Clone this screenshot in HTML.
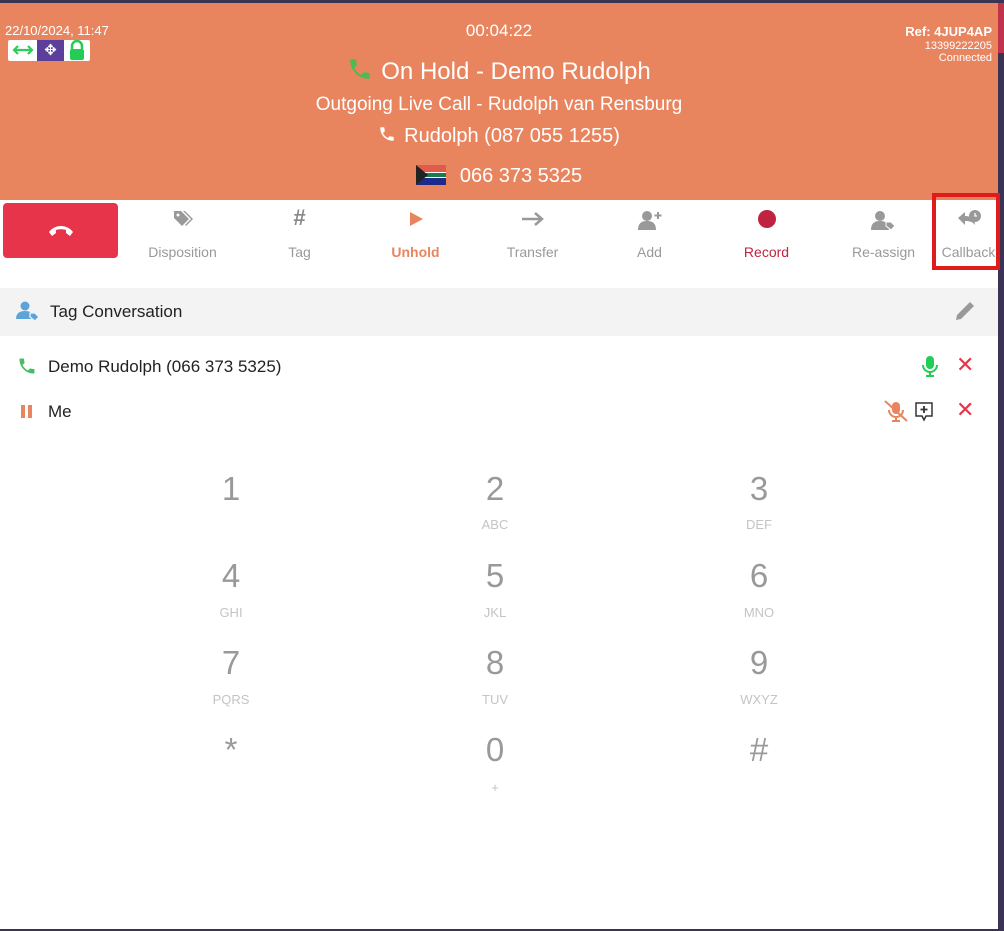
<!DOCTYPE html>
<html><head><meta charset="utf-8"><style>
*{margin:0;padding:0;box-sizing:border-box}
body{width:1004px;height:931px;overflow:hidden;background:#fff;font-family:"Liberation Sans",sans-serif;position:relative}
.a{position:absolute}
.hdr{left:0;top:3px;width:998px;height:197px;background:#E8855F;color:#fff}
.c{text-align:center;width:998px;left:0}
.tb{top:203px;text-align:center;width:117px}
.tb .l{position:absolute;top:41px;left:0;width:100%;font-size:14px;color:#999}
.tb svg{position:absolute;left:50%;top:6px;transform:translateX(-50%)}
.d{width:120px;text-align:center;color:#999;font-size:33px}
.s{width:120px;text-align:center;color:#c4c4c4;font-size:13px}
.ph{display:inline-block;vertical-align:middle}
</style></head><body>
<div class="a" style="left:0;top:0;width:1004px;height:3px;background:#3b3552"></div>
<div class="a" style="left:998px;top:0;width:6px;height:931px;background:#3b3356"></div>
<div class="a" style="left:998px;top:3px;width:6px;height:50px;background:#c0334a"></div>
<div class="a" style="left:0;top:929px;width:998px;height:2px;background:#3b3356"></div>
<div class="a hdr">
 <div class="a" style="left:5px;top:20px;font-size:13px">22/10/2024, 11:47</div>
 <div class="a" style="left:8px;top:37px;width:82px;height:21px;background:#fff;border-radius:2px"></div>
 <svg class="a" style="left:11px;top:39px" width="24" height="16"><path d="M3 8h18M7 4L3 8l4 4M17 4l4 4-4 4" stroke="#2ecc5a" stroke-width="2.2" fill="none"/></svg>
 <div class="a" style="left:37px;top:37px;width:27px;height:21px;background:#5b3f9a;color:#fff;font-size:15px;text-align:center;line-height:21px">✥</div>
 <svg class="a" style="left:67px;top:37px" width="20" height="20"><path d="M5 9V6a5 5 0 0 1 10 0v3" stroke="#22cc55" stroke-width="2.5" fill="none"/><rect x="3" y="9" width="14" height="11" rx="2" fill="#22cc55"/></svg>
 <div class="a c" style="top:18px;font-size:17px">00:04:22</div>
 <div class="a c" style="top:53px;font-size:24px"><svg class="ph" width="26" height="26" viewBox="0 0 24 24" style="margin-right:8px;vertical-align:-3px"><path d="M6.6 10.8c1.4 2.8 3.8 5.1 6.6 6.6l2.2-2.2c.3-.3.7-.4 1-.2 1.1.4 2.3.6 3.6.6.6 0 1 .4 1 1V20c0 .6-.4 1-1 1C10.6 21 3 13.4 3 4c0-.6.4-1 1-1h3.5c.6 0 1 .4 1 1 0 1.3.2 2.5.6 3.6.1.3 0 .7-.2 1z" fill="#4cbb55"/></svg>On Hold - Demo Rudolph</div>
 <div class="a c" style="top:91px;font-size:19px">Outgoing Live Call - Rudolph van Rensburg</div>
 <div class="a c" style="top:122px;font-size:20px"><svg class="ph" width="18" height="18" viewBox="0 0 24 24" style="margin-right:8px;vertical-align:-1px"><path d="M6.6 10.8c1.4 2.8 3.8 5.1 6.6 6.6l2.2-2.2c.3-.3.7-.4 1-.2 1.1.4 2.3.6 3.6.6.6 0 1 .4 1 1V20c0 .6-.4 1-1 1C10.6 21 3 13.4 3 4c0-.6.4-1 1-1h3.5c.6 0 1 .4 1 1 0 1.3.2 2.5.6 3.6.1.3 0 .7-.2 1z" fill="#fff"/></svg>Rudolph (087 055 1255)</div>
 <div class="a c" style="top:162px;font-size:20px"><span style="display:inline-block;width:30px;height:20px;vertical-align:-3px;margin-right:14px;background:linear-gradient(#e25a4a 0 35%,#fff 35% 40%,#1d7a4a 40% 60%,#fff 60% 65%,#1e2a8a 65%);position:relative"><span style="position:absolute;left:0;top:0;border-left:12px solid #222;border-top:10px solid transparent;border-bottom:10px solid transparent"></span></span>066 373 5325</div>
 <div class="a" style="right:6px;top:21px;font-size:13px;font-weight:bold;text-align:right">Ref: 4JUP4AP</div>
 <div class="a" style="right:6px;top:37px;font-size:11px;text-align:right;line-height:12px">13399222205<br>Connected</div>
</div>
<div class="a" style="left:3px;top:203px;width:115px;height:55px;background:#E8344A;border-radius:4px"></div>
<svg class="a" style="left:48px;top:223px" width="26" height="14"><path d="M1 9c6-8 18-8 24 0l-3 4-4-3v-3c-3-1-7-1-10 0v3l-4 3z" fill="#fff"/></svg>
<div class="a tb" style="left:124px"><svg width="22" height="20"><path d="M2 2h7l8 8-7 7-8-8z" fill="#999"/><path d="M11 2h2l8 8-7 7-1-1 6-6z" fill="#999"/><circle cx="6" cy="6" r="1.5" fill="#fff"/></svg><div class="l">Disposition</div></div>
<div class="a tb" style="left:241px"><div style="position:absolute;top:2px;width:100%;font-size:22px;color:#888;font-weight:bold">#</div><div class="l">Tag</div></div>
<div class="a tb" style="left:357px"><svg width="18" height="20"><path d="M3 3l13 7-13 7z" fill="#E8855F"/></svg><div class="l" style="color:#E8855F;font-weight:bold">Unhold</div></div>
<div class="a tb" style="left:474px"><svg width="26" height="20"><path d="M2 10h20M15 4l7 6-7 6" stroke="#999" stroke-width="2.5" fill="none"/></svg><div class="l">Transfer</div></div>
<div class="a tb" style="left:591px"><svg width="24" height="22"><circle cx="9" cy="7" r="5" fill="#999"/><path d="M0 21c0-7 4-9 9-9s9 2 9 9z" fill="#999"/><path d="M20 3v7M16.5 6.5h7" stroke="#999" stroke-width="2"/></svg><div class="l">Add</div></div>
<div class="a tb" style="left:708px"><svg width="20" height="20"><circle cx="10" cy="10" r="9" fill="#c0233f"/></svg><div class="l" style="color:#c0233f">Record</div></div>
<div class="a tb" style="left:825px"><svg width="26" height="22"><circle cx="9" cy="7" r="5" fill="#999"/><path d="M0 21c0-7 4-9 9-9s9 2 9 9z" fill="#999"/><path d="M15 13h5l4 4-4 4-5-4z" fill="#999" stroke="#fff" stroke-width="1"/></svg><div class="l">Re-assign</div></div>
<div class="a tb" style="left:910px"><svg width="26" height="22"><path d="M2 9l7-6v4c6 0 10 3 10 9-2-3-5-4-10-4v4z" fill="#999"/><circle cx="19" cy="7" r="6" fill="#999"/><path d="M19 4v3h2" stroke="#fff" stroke-width="1.3" fill="none"/></svg><div class="l">Callback</div></div>
<div class="a" style="left:932px;top:193px;width:68px;height:77px;border:4px solid #e01b1b"></div>
<div class="a" style="left:0;top:288px;width:998px;height:48px;background:#f3f3f3"></div>
<svg class="a" style="left:16px;top:301px" width="24" height="20"><circle cx="9" cy="5" r="4.5" fill="#5ba3d9"/><path d="M0 18c0-6 4-8 9-8s9 2 9 8z" fill="#5ba3d9"/><path d="M14 12h5l4 4-4 4-5-4z" fill="#5ba3d9" stroke="#f3f3f3" stroke-width="1.3"/></svg>
<div class="a" style="left:50px;top:302px;font-size:17px;color:#222">Tag Conversation</div>
<svg class="a" style="left:954px;top:300px" width="24" height="22"><path d="M2 20l1-5 13-13 4 4-13 13z" fill="#999"/></svg>
<svg class="a" style="left:17px;top:356px" width="20" height="20" viewBox="0 0 24 24"><path d="M6.6 10.8c1.4 2.8 3.8 5.1 6.6 6.6l2.2-2.2c.3-.3.7-.4 1-.2 1.1.4 2.3.6 3.6.6.6 0 1 .4 1 1V20c0 .6-.4 1-1 1C10.6 21 3 13.4 3 4c0-.6.4-1 1-1h3.5c.6 0 1 .4 1 1 0 1.3.2 2.5.6 3.6.1.3 0 .7-.2 1z" fill="#4cbb66"/></svg>
<div class="a" style="left:48px;top:357px;font-size:17px;color:#222">Demo Rudolph (066 373 5325)</div>
<svg class="a" style="left:920px;top:355px" width="20" height="22"><rect x="6" y="1" width="8" height="13" rx="4" fill="#22cc55"/><path d="M3 10a7 7 0 0 0 14 0M10 17v4M6 21h8" stroke="#22cc55" stroke-width="2" fill="none"/></svg>
<div class="a" style="left:956px;top:352px;color:#e8344a;font-size:22px">✕</div>
<div class="a" style="left:21px;top:405px;width:4px;height:13px;background:#E8855F"></div>
<div class="a" style="left:28px;top:405px;width:4px;height:13px;background:#E8855F"></div>
<div class="a" style="left:48px;top:402px;font-size:17px;color:#222">Me</div>
<svg class="a" style="left:884px;top:400px" width="24" height="22"><rect x="8" y="2" width="8" height="12" rx="4" fill="#E8855F"/><path d="M5 10a7 7 0 0 0 14 0M12 17v4M8 21h8" stroke="#E8855F" stroke-width="2" fill="none"/><path d="M1 1l22 20" stroke="#E8855F" stroke-width="2"/></svg>
<svg class="a" style="left:914px;top:401px" width="20" height="22"><path d="M2 2h16v13h-6l-2 4-2-4H2z" stroke="#333" stroke-width="1.5" fill="none"/><path d="M10 5v7M6.5 8.5h7" stroke="#333" stroke-width="1.8"/></svg>
<div class="a" style="left:956px;top:397px;color:#e8344a;font-size:22px">✕</div>
<div class="a d" style="left:171px;top:470px">1</div>
<div class="a d" style="left:435px;top:470px">2</div><div class="a s" style="left:435px;top:517px">ABC</div>
<div class="a d" style="left:699px;top:470px">3</div><div class="a s" style="left:699px;top:517px">DEF</div>
<div class="a d" style="left:171px;top:557px">4</div><div class="a s" style="left:171px;top:605px">GHI</div>
<div class="a d" style="left:435px;top:557px">5</div><div class="a s" style="left:435px;top:605px">JKL</div>
<div class="a d" style="left:699px;top:557px">6</div><div class="a s" style="left:699px;top:605px">MNO</div>
<div class="a d" style="left:171px;top:644px">7</div><div class="a s" style="left:171px;top:692px">PQRS</div>
<div class="a d" style="left:435px;top:644px">8</div><div class="a s" style="left:435px;top:692px">TUV</div>
<div class="a d" style="left:699px;top:644px">9</div><div class="a s" style="left:699px;top:692px">WXYZ</div>
<div class="a d" style="left:171px;top:731px">*</div>
<div class="a d" style="left:435px;top:731px">0</div><div class="a s" style="left:435px;top:780px">+</div>
<div class="a d" style="left:699px;top:731px">#</div>
</body></html>
